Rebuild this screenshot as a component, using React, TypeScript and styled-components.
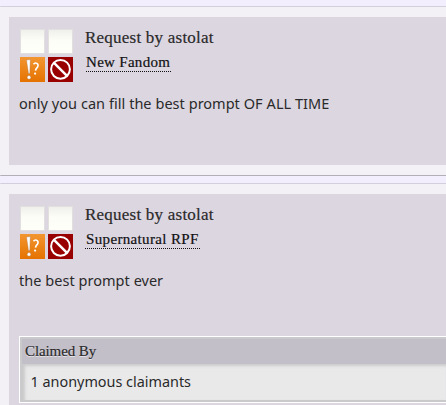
import React from "react";
import styled, { createGlobalStyle } from "styled-components";

const Global = createGlobalStyle`
  body { margin: 0; background: #f2eefd; overflow: hidden; }
`;

const Page = styled.main`
  height: 405px;
  padding-top: 6px;
  box-sizing: border-box;
  overflow: hidden;
  color: #2a2a2a;
  font-family: "Noto Sans", sans-serif;
`;

const Panel = styled.section`
  height: 170px;
  box-sizing: border-box;
  margin-bottom: 7px;
  padding: 10px 0 10px 9px;
  background: #f3f0f6;
  border-top: 1px solid #d2d0da;
  border-bottom: 1px solid #b1afb8;
  border-radius: 1px 0 0 1px;
`;

const TallPanel = styled(Panel)`
  height: 240px;
`;

const Blurb = styled.article`
  height: 100%;
  box-sizing: border-box;
  padding: 12px 0 0 10px;
  background: #dcd6e1;
`;

const Header = styled.header`
  display: flex;
  height: 54px;
`;

const Tags = styled.div`
  display: grid;
  grid-template-columns: 25px 25px;
  grid-template-rows: 25px 25px;
  gap: 3px;
  margin: 0 12px 0 1px;
`;

const EmptyTag = styled.span`
  background: linear-gradient(#eeeeea, #fdfdf8 45%, #fffffa);
  box-shadow: inset 0 0 0 1px #e2e0df;
`;

const Icon = styled.svg`
  display: block;
  width: 25px;
  height: 25px;
`;

const Titles = styled.div`
  display: flex;
  flex-direction: column;
  align-items: flex-start;
  font-family: "Liberation Serif", serif;
  white-space: nowrap;
  -webkit-text-stroke-width: 0.2px;
`;

const Title = styled.h4`
  margin: -2px 0 0;
  font-size: 17px;
  font-weight: 400;
  line-height: 22px;
  letter-spacing: 0.23px;
`;

const Fandom = styled.a<{ $offset: number; $spacing: number }>`
  margin: 4px 0 0 ${(p) => p.$offset}px;
  padding: 0 1px 0 ${(p) => 1 - p.$offset}px;
  height: 18px;
  border-bottom: 1px dotted #111;
  color: #111;
  font-size: 15px;
  line-height: 18px;
  letter-spacing: ${(p) => p.$spacing}px;
`;

const Prompt = styled.p`
  margin: 9px 0 0;
  font-size: 14.5px;
  line-height: 22px;
  word-spacing: 0.2px;
  white-space: nowrap;
`;

const Claims = styled.div`
  height: 67px;
  box-sizing: border-box;
  margin-top: 45px;
  border: 1px solid #fff;
  border-right: 0;
  background: #cac9cb;
  padding: 2px 0 2px 2px;
`;

const ClaimsTitle = styled.h5`
  height: 25px;
  margin: 0;
  padding-left: 3px;
  background: #c3bfc9;
  font: 400 15px/25px "Liberation Serif", serif;
  letter-spacing: -0.1px;
  -webkit-text-stroke-width: 0.2px;
  text-shadow: 0 1px 0 #e8e5eb;
`;

const ClaimsBody = styled.div`
  height: 36px;
  margin-left: 1px;
  padding-left: 7.5px;
  background: #e9e9ea;
  box-shadow: inset 2px 2px 3px #cbcbcd;
  font-size: 14.4px;
  line-height: 35px;
`;

function TagIcons() {
  return (
    <Tags>
      <EmptyTag />
      <EmptyTag />
      <Icon viewBox="0 0 25 25">
        <defs>
          <linearGradient id="orange" x2="0" y2="1">
            <stop stopColor="#f39630" />
            <stop offset="1" stopColor="#e57200" />
          </linearGradient>
        </defs>
        <rect width="25" height="25" fill="url(#orange)" />
        <path d="M6.5 3 L10.3 2.5 L9.8 16.5 L8.5 16.5 Z" fill="#fff" stroke="#a97850" strokeWidth=".4" />
        <circle cx="9" cy="20.4" r="1.8" fill="#fff" stroke="#a97850" strokeWidth=".4" />
        <path d="M13.5 7.3 C15 5.2 18.4 5.9 18 8.8 C17.7 11 15.8 10.9 15.5 13.7" fill="none" stroke="#fff" strokeWidth="1.6" />
        <circle cx="15.1" cy="16.6" r="1.1" fill="#fff" />
      </Icon>
      <Icon viewBox="0 0 25 25">
        <rect width="25" height="25" fill="#990000" />
        <g fill="none" stroke="#fff" strokeWidth="2">
          <circle cx="12.5" cy="12.3" r="9.4" />
          <path d="M6 5.8 L19 18.8" strokeWidth="2.5" />
        </g>
      </Icon>
    </Tags>
  );
}

export default function App() {
  return (
    <>
      <Global />
      <Page>
        <Panel>
          <Blurb>
            <Header>
              <TagIcons />
              <Titles>
                <Title>Request by astolat</Title>
                <Fandom $offset={1} $spacing={0.3}>New Fandom</Fandom>
              </Titles>
            </Header>
            <Prompt>only you can fill the best prompt OF ALL TIME</Prompt>
          </Blurb>
        </Panel>
        <TallPanel>
          <Blurb>
            <Header>
              <TagIcons />
              <Titles>
                <Title>Request by astolat</Title>
                <Fandom $offset={0} $spacing={0.35}>Supernatural RPF</Fandom>
              </Titles>
            </Header>
            <Prompt>the best prompt ever</Prompt>
            <Claims>
              <ClaimsTitle>Claimed By</ClaimsTitle>
              <ClaimsBody>1 anonymous claimants</ClaimsBody>
            </Claims>
          </Blurb>
        </TallPanel>
      </Page>
    </>
  );
}
